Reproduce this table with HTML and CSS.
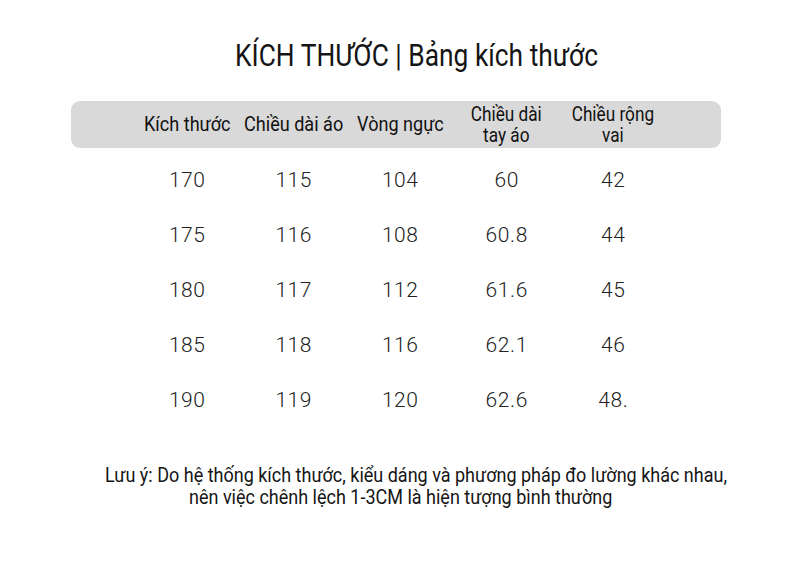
FILE: index.html
```html
<!DOCTYPE html>
<html lang="vi">
<head>
<meta charset="utf-8">
<title>Bảng kích thước</title>
<link rel="stylesheet" href="styles.css">
</head>
<body>
<div class="page">
  <h1 class="title"><span class="squeeze">KÍCH THƯỚC | Bảng kích thước</span></h1>
  <div class="table">
    <div class="head">
      <div class="cell"><span class="hs">Kích thước</span></div>
      <div class="cell"><span class="hs">Chiều dài áo</span></div>
      <div class="cell"><span class="hs">Vòng ngực</span></div>
      <div class="cell"><span class="hs"><span class="ln">Chiều dài</span><span class="ln">tay áo</span></span></div>
      <div class="cell"><span class="hs"><span class="ln">Chiều rộng</span><span class="ln">vai</span></span></div>
    </div>
    <div class="rows">
      <div class="row"><span>170</span><span>115</span><span>104</span><span>60</span><span>42</span></div>
      <div class="row"><span>175</span><span>116</span><span>108</span><span>60.8</span><span>44</span></div>
      <div class="row"><span>180</span><span>117</span><span>112</span><span>61.6</span><span>45</span></div>
      <div class="row"><span>185</span><span>118</span><span>116</span><span>62.1</span><span>46</span></div>
      <div class="row"><span>190</span><span>119</span><span>120</span><span>62.6</span><span>48.</span></div>
    </div>
  </div>
  <div class="note">
    <div class="line one"><span class="ns">Lưu ý: Do hệ thống kích thước, kiểu dáng và phương pháp đo lường khác nhau,</span></div>
    <div class="line two"><span class="ns">nên việc chênh lệch 1-3CM là hiện tượng bình thường</span></div>
  </div>
</div>
</body>
</html>
```

FILE: styles.css
```css
* { box-sizing: border-box; }
html, body { margin: 0; padding: 0; background: #ffffff; }
body {
  font-family: Roboto, "Liberation Sans", Arial, sans-serif;
  color: #151515;
}
.page {
  width: 790px;
  height: 561px;
  padding-top: 38px;
  overflow: hidden;
}
.title {
  margin: 0;
  font-size: 31px;
  line-height: 36px;
  font-weight: 400;
  text-align: center;
  padding-left: 42px;
  white-space: nowrap;
}
.squeeze {
  display: inline-block;
  transform: scaleX(0.85);
  transform-origin: center;
}
.table {
  margin: 27px 0 0 71px;
  width: 650px;
}
.head {
  height: 47px;
  background: #d9d9d9;
  border-radius: 9px;
  display: grid;
  grid-template-columns: repeat(5, 106.5px);
  padding-left: 63px;
  align-items: center;
  justify-items: center;
}
.cell {
  font-size: 21px;
  line-height: 21px;
  text-align: center;
  white-space: nowrap;
  color: #111;
}
.hs {
  display: inline-block;
  transform: scaleX(0.86);
  transform-origin: center;
}
.ln {
  display: block;
  font-size: 20px;
  line-height: 21px;
}
.rows {
  margin-top: 5px;
}
.row {
  height: 55px;
  display: grid;
  grid-template-columns: repeat(5, 106.5px);
  padding-left: 63px;
  align-items: center;
  justify-items: center;
  font-size: 21px;
  line-height: 55px;
  font-weight: 300;
  color: #222;
  letter-spacing: 0.6px;
}
.note {
  margin-top: 36px;
  font-size: 20px;
  line-height: 22px;
  white-space: nowrap;
}
.line.one { padding-left: 105px; }
.line.two { padding-left: 189px; }
.ns {
  display: inline-block;
  transform: scaleX(0.9);
  transform-origin: left center;
}
```
